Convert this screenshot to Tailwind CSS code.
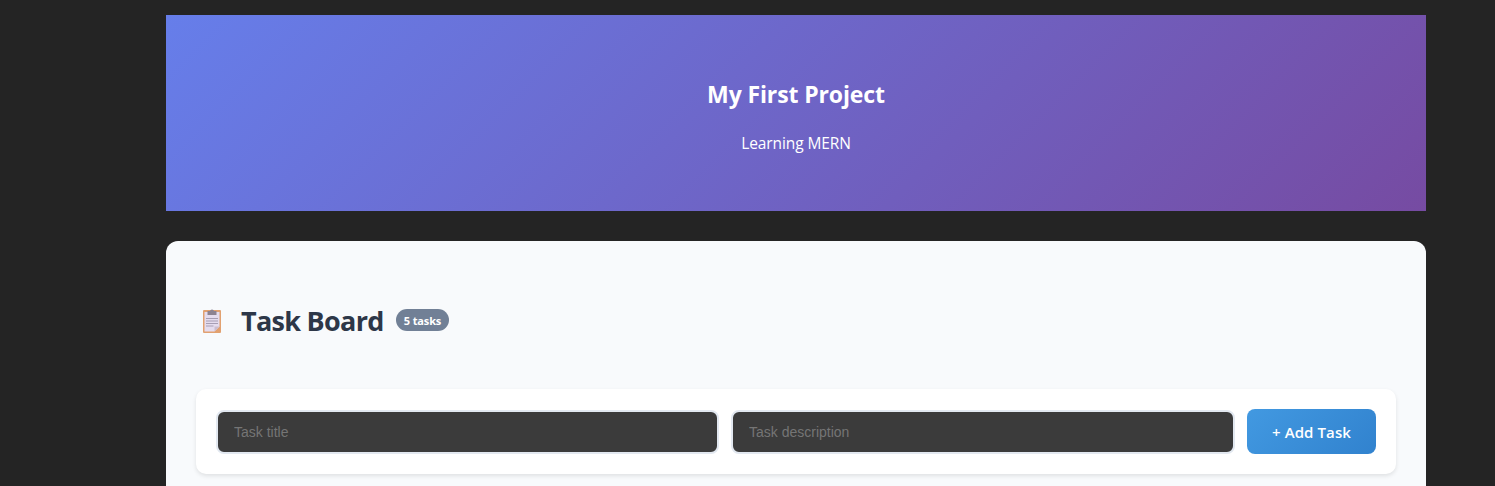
<!DOCTYPE html>
<html lang="en">
<head>
<meta charset="utf-8">
<title>Task Board</title>
<script src="https://cdn.jsdelivr.net/npm/@tailwindcss/browser@4"></script>
</head>
<body class="h-[486px] overflow-hidden bg-[#242424] font-['Open_Sans','Noto_Sans',sans-serif]">
<div class="ml-[166px] flex w-[1260px] flex-col gap-[30px] pt-[15px]">
  <header class="flex h-[196px] flex-col items-center bg-linear-[135deg,#667eea_0%,#764ba2_100%] pt-[61px] text-white">
    <h1 class="text-[23px] leading-[36px] font-bold whitespace-nowrap tracking-[-0.12px]">My First Project</h1>
    <p class="mt-[19px] text-[15.5px] leading-[24px] tracking-[-0.1px] whitespace-nowrap">Learning MERN</p>
  </header>
  <main class="h-[245px] rounded-t-xl bg-[#f8fafc] px-[30px] pt-[58px]">
    <div class="flex h-[44px] items-center">
      <svg class="ml-[6px] h-[24px] w-[20px] shrink-0" viewBox="0 0 20 24">
        <rect x="1" y="1" width="18" height="23" rx="1" fill="#e2a170"/>
        <path d="M2.500 3h15v14.500l-5 5H2.500z" fill="#e5dcee"/>
        <path d="M12.500 22.500V17.500h5z" fill="#cbbdd0"/>
        <path d="M5.500 2H8Q8.300.500 10 .500T12 2h2.500v4h-9z" fill="#8d8391"/>
        <path d="M4 9.500h12M4 12h12M4 14.500h12M4 17h7.500" stroke="#a79eb4"/>
      </svg>
      <h2 class="ml-[19px] w-[143px] text-[27px] leading-[44px] font-bold tracking-[-0.7px] whitespace-nowrap text-[#2d3748]">Task Board</h2>
      <span class="relative -top-px ml-3 flex h-[22px] w-[53px] items-center justify-center rounded-full bg-[#718096] pt-[2px] text-[11px] font-bold tracking-[-0.15px] whitespace-nowrap text-white">5 tasks</span>
    </div>
    <form class="mt-[46px] flex h-[85px] items-center gap-3 rounded-[10px] bg-white px-5 shadow-[0_2px_4px_rgba(0,0,0,0.1)]">
      <input class="h-[44px] w-[503px] shrink-0 rounded-lg border-2 border-[#e2e8f0] bg-[#3b3b3b] px-4 font-['Liberation_Sans',sans-serif] text-[14px] placeholder:text-[#757575]" placeholder="Task title">
      <input class="h-[44px] min-w-0 flex-1 rounded-lg border-2 border-[#e2e8f0] bg-[#3b3b3b] px-4 font-['Liberation_Sans',sans-serif] text-[14px] placeholder:text-[#757575]" placeholder="Task description">
      <button type="button" class="h-[45px] w-[129px] rounded-lg bg-linear-[135deg,#4299e1,#3182ce] pt-px text-[15px] font-semibold tracking-[0.1px] whitespace-nowrap text-white">+ Add Task</button>
    </form>
  </main>
</div>
</body>
</html>
